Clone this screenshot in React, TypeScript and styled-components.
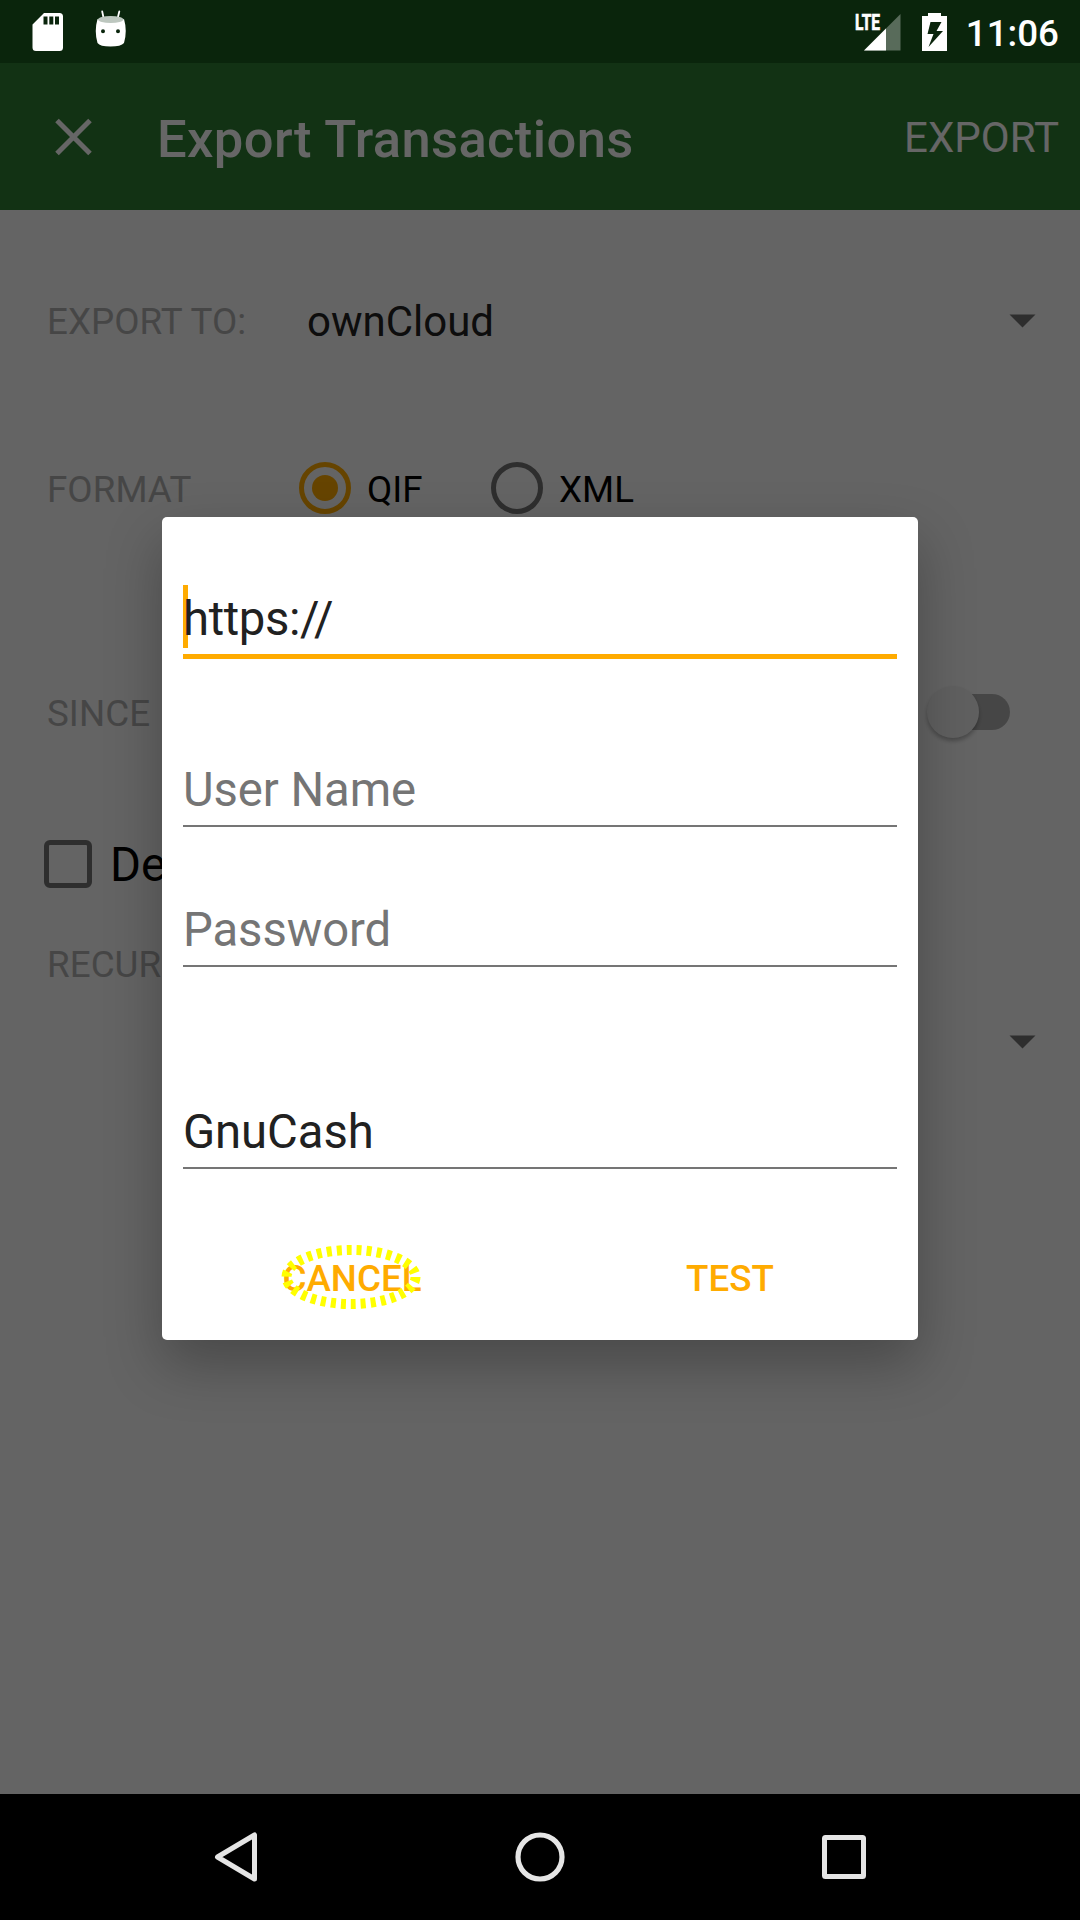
import React from 'react';
import styled, { createGlobalStyle } from 'styled-components';

const ACCENT = '#ffab00';

const GlobalStyle = createGlobalStyle`
  * { box-sizing: border-box; }
  html, body { margin: 0; padding: 0; background: #000; }
  body { font-family: Roboto, "Noto Sans", sans-serif; }
  svg { display: block; flex: none; }
`;

const Screen = styled.div`
  position: relative;
  display: flex;
  flex-direction: column;
  width: 1080px;
  height: 1920px;
  overflow: hidden;
  background: #fafafa;
`;

const StatusBar = styled.header`
  display: flex;
  height: 63px;
  background: #1b5e20;
`;

const StatusContent = styled.div`
  position: relative;
  z-index: 2;
  display: flex;
  flex: 1;
  justify-content: space-between;
  padding: 0 21px 0 32px;
`;

const StatusGroup = styled.div<{ $gap: number }>`
  display: flex;
  align-items: center;
  gap: ${p => p.$gap}px;
`;

const Clock = styled.span`
  width: 96px;
  margin: 4px 0 0 -5px;
  font-size: 36.75px;
  font-weight: 500;
  line-height: 44px;
  text-align: right;
  color: #fff;
`;

const AppBar = styled.div`
  display: flex;
  align-items: center;
  height: 147px;
  padding: 0 21px 0 55px;
  background: #2e7d32;
  color: #fff;
`;

const Title = styled.h1`
  flex: 1;
  margin: 4px 0 0 65px;
  font-size: 52.5px;
  font-weight: 500;
  line-height: 62px;
  letter-spacing: 0.38px;
  white-space: nowrap;
`;

const AppBarAction = styled.span`
  margin-top: 2px;
  font-size: 42px;
  line-height: 50px;
`;

const Form = styled.main`
  flex: 1;
  padding-top: 61px;
`;

const Row = styled.div<{ $height: number; $gap?: number }>`
  display: flex;
  align-items: center;
  height: ${p => p.$height}px;
  margin-top: ${p => p.$gap ?? 0}px;
  padding: 0 44px 0 47px;
`;

const Label = styled.span<{ $width?: number }>`
  width: ${p => (p.$width ? `${p.$width}px` : 'auto')};
  margin-top: 2px;
  font-size: 36.75px;
  line-height: 44px;
  letter-spacing: 0.05px;
  color: #b0b0b0;
  white-space: nowrap;
`;

const SpinnerValue = styled.span`
  flex: 1;
  margin-top: 2px;
  font-size: 42px;
  line-height: 50px;
  color: #212121;
`;

const Push = styled.span`
  flex: 1;
`;

const Radio = styled.span<{ $on?: boolean }>`
  display: flex;
  align-items: center;
  justify-content: center;
  width: 52px;
  height: 52px;
  margin-top: -2px;
  border: 5px solid ${p => (p.$on ? ACCENT : '#737373')};
  border-radius: 50%;
  &::after {
    content: '';
    width: 26px;
    height: 26px;
    border-radius: 50%;
    background: ${p => (p.$on ? ACCENT : 'transparent')};
  }
`;

const RadioText = styled.span<{ $width: number }>`
  width: ${p => p.$width}px;
  margin-top: 2px;
  padding-left: 16px;
  font-size: 36.75px;
  line-height: 44px;
  color: #000;
`;

const SwitchTrack = styled.span`
  display: flex;
  align-items: center;
  width: 70px;
  height: 36px;
  margin: -2px 26px 0 0;
  border-radius: 18px;
  background: #b0b0b0;
`;

const SwitchThumb = styled.span`
  flex: none;
  width: 52px;
  height: 52px;
  margin-left: -13px;
  border-radius: 50%;
  background: #f1f1f1;
  box-shadow: 0 3px 4px rgba(0, 0, 0, 0.28);
`;

const Checkbox = styled.span`
  width: 48px;
  height: 48px;
  margin: -1px 18px 0 -3px;
  border: 5px solid #737373;
  border-radius: 6px;
`;

const CheckText = styled.span`
  margin-top: 2px;
  font-size: 47.25px;
  line-height: 56px;
  color: #000;
`;

const Scrim = styled.div`
  position: absolute;
  inset: 0;
  z-index: 1;
  display: flex;
  justify-content: center;
  align-items: flex-start;
  padding-top: 517px;
  background: rgba(0, 0, 0, 0.6);
`;

const Dialog = styled.section`
  display: flex;
  flex-direction: column;
  width: 756px;
  height: 823px;
  padding: 67px 21px 0;
  border-radius: 5px;
  background: #fff;
  box-shadow: 0 24px 56px rgba(0, 0, 0, 0.28);
`;

const Field = styled.div<{ $height: number; $gap?: number; $focused?: boolean; $hint?: boolean }>`
  display: flex;
  align-items: flex-start;
  flex: none;
  height: ${p => p.$height}px;
  margin-top: ${p => p.$gap ?? 0}px;
  border-bottom: ${p => (p.$focused ? `5px solid ${ACCENT}` : '2px solid #757575')};
  font-size: 47.25px;
  line-height: 56px;
  letter-spacing: ${p => (p.$focused ? -0.38 : -0.08)}px;
  color: ${p => (p.$hint ? '#757575' : '#212121')};
  white-space: nowrap;
`;

const Caret = styled.span`
  width: 5px;
  height: 63px;
  margin: 1px -5px 0 0;
  background: ${ACCENT};
`;

const FieldText = styled.span<{ $top: number }>`
  position: relative;
  margin-top: ${p => p.$top}px;
`;

const Actions = styled.div`
  display: grid;
  grid-template-columns: 1fr 1fr;
  margin: 88px -22px 0 -20px;
`;

const Action = styled.button`
  display: flex;
  justify-content: center;
  padding: 0;
  border: 0;
  background: none;
  font-family: inherit;
  font-size: 36.75px;
  font-weight: 500;
  line-height: 44px;
  color: ${ACCENT};
`;

const ActionText = styled.span`
  position: relative;
`;

const Highlight = styled.svg`
  position: absolute;
  left: -3px;
  top: -14px;
`;

const NavBar = styled.nav`
  position: relative;
  z-index: 2;
  display: flex;
  align-items: center;
  justify-content: space-between;
  height: 126px;
  padding: 0 211px;
  background: #000;
`;

const SdIcon = () => (
  <svg width="32" height="40" viewBox="0 0 32 40">
    <path fillRule="evenodd" fill="#fff" d="M12 1H27.500Q31 1 31 4.500V35.500Q31 39 27.500 39H4Q.5 39 .5 35.500V12.500ZM11.500 4.500V12.500H15.500V4.500ZM17.300 4.500V12.500H21.300V4.500ZM23 4.500V12.500H27V4.500Z" />
  </svg>
);

const RobotIcon = () => (
  <svg width="32" height="44" viewBox="0 0 32 44">
    <path d="M7.200 1.500L8.800 9M24.300 1.500L22.500 9" stroke="#fff" strokeWidth="1.800" strokeLinecap="round" />
    <path fillRule="evenodd" fill="#fff" d="M2.500 9Q16 15 29 9Q32.500 21 29 33Q26 36.500 15.500 36.500Q5 36.500 2.500 33Q-1 21 2.500 9ZM8 19.300A2 2 0 1 0 8 23.300A2 2 0 1 0 8 19.300ZM23 19.300A2 2 0 1 0 23 23.300A2 2 0 1 0 23 19.300Z" />
    <ellipse cx="15.700" cy="9.500" rx="12.700" ry="3.500" fill="#bdc7bf" />
  </svg>
);

const SignalIcon = () => (
  <svg width="48" height="54" viewBox="-2 -8 48 54">
    <path d="M45.500 1V37.500H9Z" fill="#fff" fillOpacity=".32" />
    <path d="M31 15.500V37.500H9Z" fill="#fff" />
    <text x="0" y="17.200" fontFamily="Roboto, sans-serif" fontSize="22.500" fontWeight="700" fill="#fff" stroke="#fff" strokeWidth=".7" textLength="25" lengthAdjust="spacingAndGlyphs">LTE</text>
  </svg>
);

const BatteryIcon = () => (
  <svg width="25" height="38" viewBox="0 0 25 38">
    <path fillRule="evenodd" fill="#fff" d="M6 0H19V3H25V38H0V3H6ZM8.500 9L5.500 21H11.500L6.500 34L21 18H14.500L19.500 9Z" />
  </svg>
);

const CloseIcon = () => (
  <svg width="37" height="38" viewBox="0 0 37 38">
    <path d="M2 2.500L35 35.500M35 2.500L2 35.500" stroke="#fff" strokeWidth="5" />
  </svg>
);

const DropArrow = () => (
  <svg width="27" height="14" viewBox="0 0 27 14">
    <path d="M.5 .5H26.500L13.500 13.500Z" fill="#737373" />
  </svg>
);

export default function App() {
  return (
    <Screen>
      <GlobalStyle />
      <StatusBar>
        <StatusContent>
          <StatusGroup $gap={31}>
            <SdIcon />
            <RobotIcon />
          </StatusGroup>
          <StatusGroup $gap={21}>
            <SignalIcon />
            <BatteryIcon />
            <Clock>11:06</Clock>
          </StatusGroup>
        </StatusContent>
      </StatusBar>
      <AppBar>
        <CloseIcon />
        <Title>Export Transactions</Title>
        <AppBarAction>EXPORT</AppBarAction>
      </AppBar>
      <Form>
        <Row $height={100}>
          <Label $width={260}>EXPORT TO:</Label>
          <SpinnerValue>ownCloud</SpinnerValue>
          <DropArrow />
        </Row>
        <Row $height={100} $gap={68}>
          <Label $width={252}>FORMAT</Label>
          <Radio $on />
          <RadioText $width={140}>QIF</RadioText>
          <Radio />
          <RadioText $width={140}>XML</RadioText>
        </Row>
        <Row $height={100} $gap={124}>
          <Label>SINCE</Label>
          <Push />
          <SwitchTrack>
            <SwitchThumb />
          </SwitchTrack>
        </Row>
        <Row $height={80} $gap={61}>
          <Checkbox />
          <CheckText>De</CheckText>
        </Row>
        <Row $height={40} $gap={40}>
          <Label>RECUR</Label>
        </Row>
        <Row $height={40} $gap={38}>
          <Push />
          <DropArrow />
        </Row>
      </Form>
      <Scrim>
        <Dialog>
          <Field $height={75} $focused>
            <Caret />
            <FieldText $top={7}>https://</FieldText>
          </Field>
          <Field $height={60} $gap={108} $hint>
            <FieldText $top={-5}>User Name</FieldText>
          </Field>
          <Field $height={60} $gap={80} $hint>
            <FieldText $top={-5}>Password</FieldText>
          </Field>
          <Field $height={60} $gap={142}>
            <FieldText $top={-5}>GnuCash</FieldText>
          </Field>
          <Actions>
            <Action>
              <ActionText>
                CANCEL
                <Highlight width="144" height="68" viewBox="0 0 144 68">
                  <ellipse cx="72" cy="34" rx="64.500" ry="27" fill="none" stroke="#ff0" strokeWidth="10" strokeDasharray="5 5" />
                </Highlight>
              </ActionText>
            </Action>
            <Action>
              <ActionText>TEST</ActionText>
            </Action>
          </Actions>
        </Dialog>
      </Scrim>
      <NavBar>
        <svg width="50" height="54" viewBox="0 0 50 54">
          <path d="M43.500 5V49L6.500 27Z" fill="none" stroke="#e5e5e5" strokeWidth="5" strokeLinejoin="round" />
        </svg>
        <svg width="54" height="54" viewBox="0 0 54 54">
          <circle cx="27" cy="27" r="22" fill="none" stroke="#e5e5e5" strokeWidth="5.200" />
        </svg>
        <svg width="50" height="50" viewBox="0 0 50 50">
          <rect x="5.500" y="5.500" width="39" height="39" rx="1" fill="none" stroke="#e5e5e5" strokeWidth="5" />
        </svg>
      </NavBar>
    </Screen>
  );
}
